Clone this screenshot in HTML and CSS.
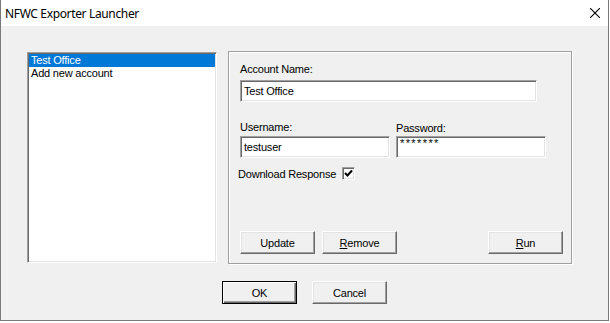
FILE: index.html
```html
<!DOCTYPE html>
<html lang="en">
<head>
  <meta charset="UTF-8" />
  <title>NFWC Exporter Launcher</title>
  <link rel="stylesheet" href="styles.css">
</head>
<body>

  <div class="window">
    <div class="titlebar">
      <span class="title">NFWC Exporter Launcher</span>
      <svg class="close" width="10" height="10" viewBox="0 0 10 10">
        <path d="M0 0 L10 10 M10 0 L0 10" stroke="#000" stroke-width="1.1" fill="none"/>
      </svg>
    </div>

    <div class="client">
      <div class="main">
        <div class="listbox">
          <div class="item selected">Test Office</div>
          <div class="item">Add new account</div>
        </div>

        <div class="group">
          <div class="lbl">Account Name:</div>
          <div class="edit wide">Test Office</div>

          <div class="pair">
            <div class="field">
              <div class="lbl">Username:</div>
              <div class="edit">testuser</div>
            </div>
            <div class="field">
              <div class="lbl pw">Password:</div>
              <div class="edit password">*******</div>
            </div>
          </div>

          <div class="check-row">
            <span>Download Response</span>
            <span class="checkbox">
              <svg width="9" height="9" viewBox="0 0 9 9">
                <path d="M1 4 L3.5 6.5 L8 1.5" stroke="#000" stroke-width="2" fill="none"/>
              </svg>
            </span>
          </div>

          <div class="btn-row">
            <button class="btn">Update</button>
            <button class="btn"><u>R</u>emove</button>
            <button class="btn run"><u>R</u>un</button>
          </div>
        </div>
      </div>

      <div class="footer">
        <button class="btn default">OK</button>
        <button class="btn">Cancel</button>
      </div>
    </div>
  </div>

</body>
</html>
```

FILE: styles.css
```css
:root {
  --face: #f0f0f0;
  --shadow: #a0a0a0;
  --dark: #696969;
  --light: #e3e3e3;
  --select: #0078d7;
}

* {
  box-sizing: border-box;
  margin: 0;
  padding: 0;
}

body {
  background: #fff;
  font-family: "Liberation Sans", Arial, sans-serif;
  font-size: 11px;
  letter-spacing: -0.2px;
  color: #000;
}

.window {
  width: 609px;
  height: 321px;
  display: flex;
  flex-direction: column;
  background: var(--face);
  border: 1px solid #7a7a7a;
  border-top: none;
}

.titlebar {
  height: 26px;
  flex-shrink: 0;
  display: flex;
  justify-content: space-between;
  align-items: center;
  padding: 0 8px 0 4px;
  background: #fff;
}

.title {
  font-family: "Noto Sans", "Open Sans", sans-serif;
  font-size: 12px;
  letter-spacing: -0.35px;
}

.client {
  flex: 1;
  padding-top: 25px;
}

.main {
  display: flex;
  align-items: flex-start;
  gap: 11px;
  padding-left: 26px;
}

/* sunken controls */
.listbox,
.edit,
.checkbox {
  background: #fff;
  border: 1px solid;
  border-color: var(--shadow) #fff #fff var(--shadow);
  box-shadow: inset 1px 1px var(--dark), inset -1px -1px var(--light);
}

.listbox {
  width: 190px;
  height: 211px;
  margin-top: 1px;
  padding: 1px;
}

.item {
  height: 13px;
  line-height: 13px;
  padding-left: 2px;
  white-space: nowrap;
}

.item.selected {
  background: var(--select);
  color: #fff;
}

.group {
  width: 344px;
  height: 213px;
  display: flex;
  flex-direction: column;
  padding: 11px 8px 9px 11px;
  border: 1px solid var(--shadow);
  box-shadow: inset 1px 1px #fff, 1px 1px #fff;
}

.lbl {
  height: 13px;
  line-height: 13px;
  white-space: nowrap;
}

.edit {
  width: 150px;
  height: 22px;
  line-height: 20px;
  padding: 0 3px;
  white-space: nowrap;
}

.edit.wide {
  width: 297px;
  margin-top: 4px;
}

.edit.password {
  line-height: 13px;
  letter-spacing: 1.4px;
}

.pair {
  display: flex;
  gap: 6px;
  margin-top: 19px;
}

.field .edit {
  margin-top: 2px;
}

.lbl.pw {
  height: 14px;
  padding-top: 1px;
}

.field .lbl.pw + .edit {
  margin-top: 1px;
}

.check-row {
  display: flex;
  align-items: center;
  gap: 6px;
  height: 13px;
  margin-top: 9px;
  margin-left: -2px;
}

.checkbox {
  width: 13px;
  height: 13px;
  display: flex;
  align-items: center;
  justify-content: center;
}

.btn-row {
  display: flex;
  gap: 7px;
  margin-top: auto;
}

.btn {
  width: 75px;
  height: 23px;
  font-family: inherit;
  font-size: 11px;
  letter-spacing: inherit;
  color: #000;
  background: var(--face);
  border: 1px solid;
  border-color: #fff var(--dark) var(--dark) #fff;
  box-shadow: inset -1px -1px var(--shadow), inset 1px 1px var(--light);
}

.btn u {
  text-decoration: underline;
}

.btn.run {
  margin-left: auto;
}

.btn.default {
  border: 1px solid #000;
  box-shadow: inset 1px 1px #fff, inset -1px -1px var(--dark), inset -2px -2px var(--shadow);
}

.footer {
  display: flex;
  justify-content: center;
  gap: 15px;
  margin-top: 17px;
}
```
